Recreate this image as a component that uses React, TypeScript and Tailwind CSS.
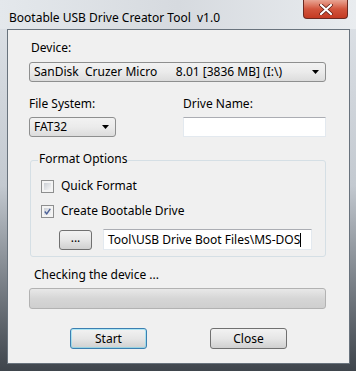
import React from "react";

const font = { fontFamily: '"Noto Sans", "Open Sans", Arial, sans-serif' };

function Combo({ children, className }: { children: React.ReactNode; className?: string }) {
  return (
    <div
      className={
        "flex items-center h-[20px] rounded-[3px] border border-[#8e8f8f] bg-gradient-to-b from-[#f2f2f2] via-[#ebebeb] to-[#dcdcdc] pl-[4px] pr-[6px] " +
        (className ?? "")
      }
    >
      <div className="flex-1 whitespace-pre text-[12px] leading-[16px] text-black">{children}</div>
      <svg width="7" height="4" viewBox="0 0 7 4">
        <path d="M0 0 L7 0 L3.5 4 Z" fill="#000" />
      </svg>
    </div>
  );
}

function Check({ checked, label }: { checked?: boolean; label: string }) {
  return (
    <div className="flex items-center gap-[7px] h-[16px]">
      <div className="w-[13px] h-[13px] border border-[#8e8f8f] bg-[#f4f4f4] p-[2px]">
        <div className="w-full h-full bg-gradient-to-br from-[#cbcfd5] to-[#f6f6f6] flex items-center justify-center">
          {checked && (
            <svg width="9" height="9" viewBox="0 0 9 9">
              <path d="M1 4.5 L3.5 7.5 L8 1" fill="none" stroke="#4a5f97" strokeWidth="1.8" />
            </svg>
          )}
        </div>
      </div>
      <span className="text-[12px] leading-[16px]">{label}</span>
    </div>
  );
}

function Button({ children, primary, className }: { children: React.ReactNode; primary?: boolean; className?: string }) {
  return (
    <div
      className={
        "flex items-center justify-center rounded-[3px] border bg-gradient-to-b from-[#f2f2f2] via-[#e6e6e6] to-[#d0d0d0] text-[12px] leading-[16px] " +
        (primary ? "border-[#3c7fb1] shadow-[inset_0_0_0_1px_#48d8fb66] " : "border-[#707070] ") +
        (className ?? "")
      }
    >
      {children}
    </div>
  );
}

export default function App() {
  return (
    <div
      style={font}
      className="w-[356px] h-[371px] overflow-hidden text-black bg-gradient-to-b from-[#dfe3e8] via-[#c3c9d0] to-[#3f454c] flex flex-col"
    >
      {/* title bar */}
      <div className="flex h-[29px] bg-gradient-to-r from-[#e4e8ec] via-[#d6dadf] to-[#e9ecef]">
        <div className="pl-[9px] pt-[10px] text-[12px] leading-[16px] whitespace-pre text-black">
          Bootable USB Drive Creator Tool  v1.0
        </div>
        <div className="ml-auto mr-[8px] w-[45px] h-[19px] rounded-b-[4px] border border-t-0 border-[#6b2a22] bg-gradient-to-b from-[#e8a493] via-[#d2553d] to-[#c43a22] flex items-center justify-center">
          <svg width="14" height="11" viewBox="0 0 14 11">
            <path d="M2 1 L12 10 M12 1 L2 10" stroke="#5a1a10" strokeWidth="3.6" strokeLinecap="round" />
            <path d="M2 1 L12 10 M12 1 L2 10" stroke="#fff" strokeWidth="2.2" strokeLinecap="round" />
          </svg>
        </div>
      </div>

      {/* client area */}
      <div className="ml-[7px] w-[343px] h-[335px] border border-[#69737d] bg-[#f0f0f0] pl-[21px] pr-[23px] pt-[10px]">
        <div className="pl-[2px] text-[12px] leading-[16px]">Device:</div>
        <Combo className="mt-[6px] w-[297px]">
          {"SanDisk  Cruzer Micro      8.01 [3836 MB] (I:\\)"}
        </Combo>

        <div className="flex mt-[14px]">
          <div className="w-[154px]">
            <div className="text-[12px] leading-[16px]">File System:</div>
            <Combo className="mt-[5px] w-[87px]">FAT32</Combo>
          </div>
          <div>
            <div className="text-[12px] leading-[16px]">Drive Name:</div>
            <div className="mt-[5px] w-[143px] h-[20px] bg-white border border-[#e3e9ef] border-t-[#abadb3]" />
          </div>
        </div>

        {/* Format Options group */}
        <div className="relative ml-[1px] mt-[23px] w-[296px] h-[97px] rounded-[3px] border border-[#d5dfe5] pl-[10px] pt-[17px]">
          <div className="absolute left-[7px] top-[-10px] bg-[#f0f0f0] px-[1px] text-[12px] leading-[16px]">
            Format Options
          </div>
          <Check label="Quick Format" />
          <div className="mt-[9px]">
            <Check checked label="Create Bootable Drive" />
          </div>
          <div className="flex items-center mt-[10px] pl-[18px]">
            <Button className="w-[33px] h-[20px] text-[11px] leading-[10px] items-end pb-[3px]">...</Button>
            <div className="ml-[11px] w-[209px] h-[21px] bg-white border border-[#e3e9ef] border-t-[#abadb3] flex items-center pl-[4px] text-[12px] leading-[16px] whitespace-nowrap overflow-hidden">
              Tool\USB Drive Boot Files\MS-DOS
              <span className="inline-block w-px h-[14px] bg-black" />
            </div>
          </div>
        </div>

        <div className="mt-[10px] pl-[5px] text-[12px] leading-[16px]">Checking the device ...</div>
        <div className="mt-[5px] w-[297px] h-[21px] rounded-[3px] border border-[#b2b2b2] bg-gradient-to-b from-[#e8e8e8] via-[#d6d6d6] to-[#cfcfcf]" />

        <div className="flex mt-[19px] pl-[41px] gap-[63px]">
          <Button primary className="w-[77px] h-[21px]">Start</Button>
          <Button className="w-[77px] h-[21px]">Close</Button>
        </div>
      </div>
    </div>
  );
}
